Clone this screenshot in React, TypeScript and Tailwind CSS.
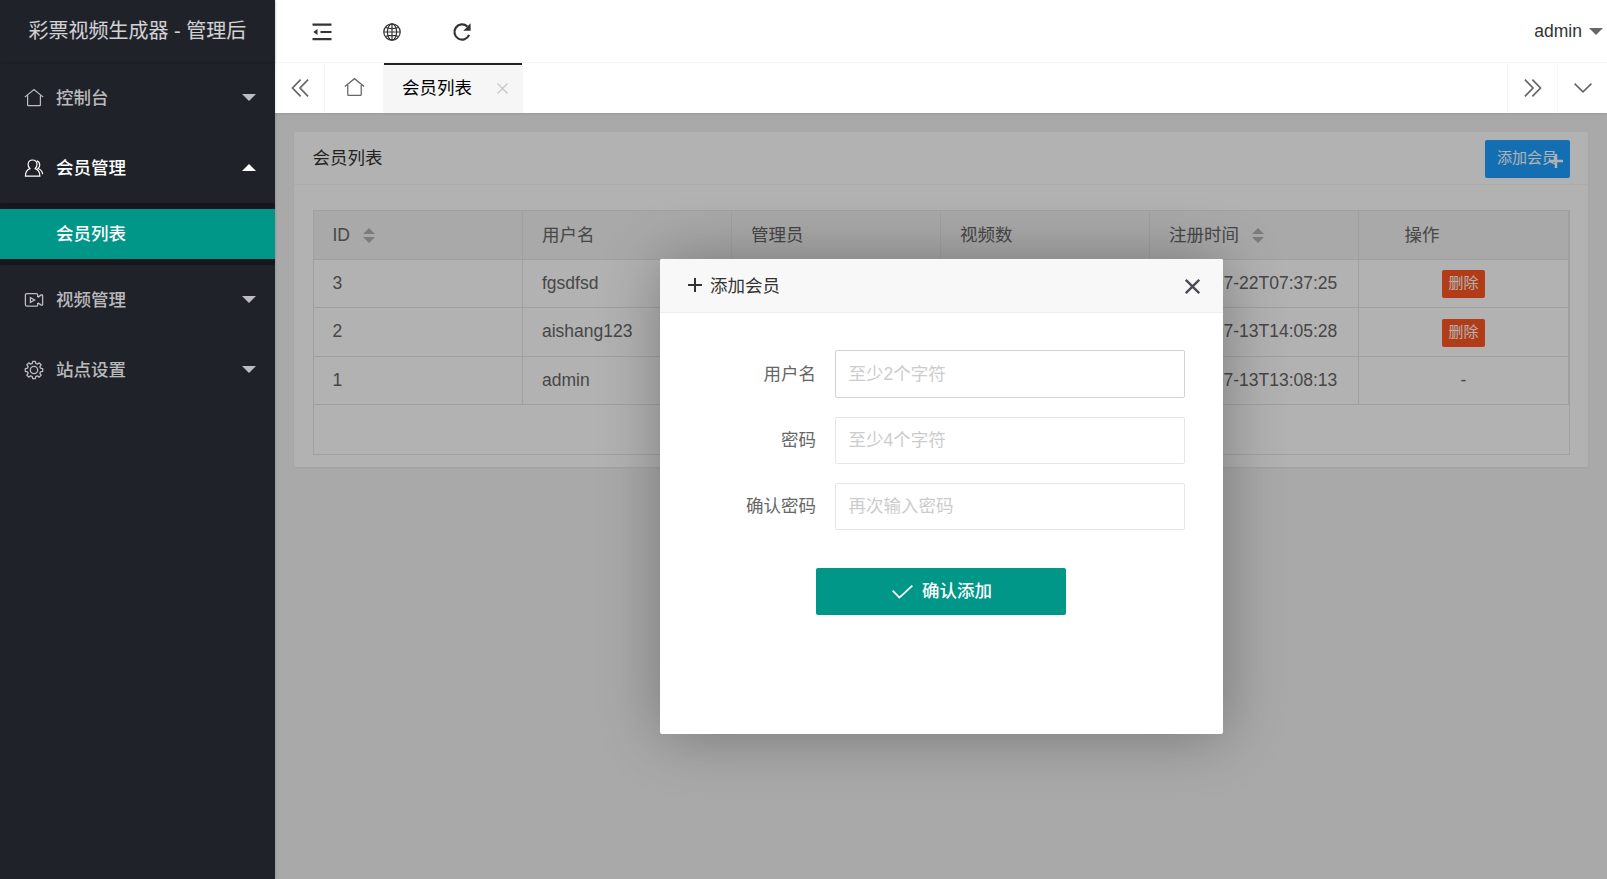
import type { ReactNode } from 'react'

const FONT = "font-['Liberation_Sans','Noto_Sans_CJK_SC',sans-serif]"

// ─── Icons ────────────────────────────────────────────────────────────────

function HomeIcon({ size = 20 }: { size?: number }) {
  return (
    <svg width={size} height={size} viewBox="0 0 20 20" fill="none" stroke="currentColor" strokeWidth="1.2">
      <path d="M.8 9.1 10 1.6l9.2 7.5" />
      <path d="M3.6 7.6v9.3q0 .7.7.7h11.4q.7 0 .7-.7V7.6" />
    </svg>
  )
}

function UserIcon() {
  return (
    <svg width="20" height="20" viewBox="0 0 20 20" fill="none" stroke="currentColor" strokeWidth="1.2">
      <path d="M5.9 10.6C4.500 9.300 4 7.800 4.100 6.300 4.300 3.600 6.100 2 8.500 2s4.300 1.600 4.500 4.300c.1 1.500-.4 3-1.800 4.300 3 1.200 4.700 3.700 4.700 7.600H1.400c0-3.900 1.500-6.400 4.500-7.600Z" />
      <path d="M12.800 2.900c1.900.7 2.900 2.100 2.900 4 0 1.500-.5 2.700-1.700 3.600 2.700 1 4.400 3 4.700 5.800" />
    </svg>
  )
}

function VideoIcon() {
  return (
    <svg width="20" height="20" viewBox="0 0 20 20" fill="none" stroke="currentColor" strokeWidth="1.3">
      <path d="M13.700 6.900V5q0-1.300-1.300-1.300H2.900Q1.400 3.700 1.400 5.200v9.300q0 1.700 1.500 1.700h9.500q1.300 0 1.300-1.300v-1.800" />
      <path d="m13.700 7.400 3.200-2.300q1.700-.9 1.700.5v8.800q0 1.400-1.700.5l-3.200-2.200" />
      <path d="M6.400 7.600v4.700l4.200-2.300Z" />
    </svg>
  )
}

function GearIcon() {
  return (
    <svg width="20" height="20" viewBox="0 0 20 20" fill="none" stroke="currentColor" strokeWidth="1.3" strokeLinejoin="round">
      <path d="m8.700 1.300 2.600 0 .5 2.200 1.500.6 1.900-1.200 1.900 1.900-1.200 1.900.6 1.500 2.200.5v2.600l-2.200.5-.6 1.500 1.200 1.900-1.900 1.900-1.900-1.200-1.500.6-.5 2.200H8.700l-.5-2.200-1.500-.6-1.900 1.200-1.900-1.900 1.200-1.900-.6-1.500-2.200-.5V8.700l2.200-.5.6-1.500-1.200-1.900 1.900-1.900 1.900 1.200 1.500-.6Z" />
      <circle cx="10" cy="10" r="3.700" />
    </svg>
  )
}

function ShrinkIcon() {
  return (
    <svg width="20" height="20" viewBox="0 0 20 20" fill="currentColor">
      <path d="M.5 1.500h19v2.200H.5zM8.500 8.900h11v2.200h-11zM.5 15.900h19v2.300H.5zM1.300 10l4.200-3v6z" />
    </svg>
  )
}

function GlobeIcon() {
  return (
    <svg width="20" height="20" viewBox="0 0 20 20" fill="none" stroke="currentColor" strokeWidth="1.2">
      <circle cx="10" cy="10" r="8.200" />
      <ellipse cx="10" cy="10" rx="4.600" ry="8.200" />
      <path d="M10 1.800v16.400M1.800 10h16.400M3.300 5.500q6.700 2.200 13.400 0M3.300 14.500q6.700-2.200 13.400 0" />
    </svg>
  )
}

function RefreshIcon() {
  return (
    <svg width="20" height="20" viewBox="0 0 20 20" fill="none">
      <path d="M17.100 12.900A7.600 7.600 0 1 1 15.300 4.500" stroke="currentColor" strokeWidth="2.200" />
      <path d="M18.600 1.300v7.500h-7.400l2.700-2.600 1.400-1.600Z" fill="currentColor" />
    </svg>
  )
}

function DoubleChevron({ flip = false }: { flip?: boolean }) {
  return (
    <svg
      width="20"
      height="20"
      viewBox="0 0 20 20"
      fill="none"
      stroke="currentColor"
      strokeWidth="1.7"
      className={flip ? 'rotate-180' : ''}
    >
      <path d="M10.600 1.700 2.500 10l8.100 8.300M18.100 1.700 10 10l8.100 8.300" />
    </svg>
  )
}

function Plus({ className = '', width = 2 }: { className?: string; width?: number }) {
  return (
    <svg width="14" height="14" viewBox="0 0 14 14" stroke="currentColor" strokeWidth={width} className={className}>
      <path d="M7 0v14M0 7h14" />
    </svg>
  )
}

function Caret({ up = false }: { up?: boolean }) {
  return (
    <svg width="14" height="7" viewBox="0 0 14 7" fill="currentColor" className={up ? 'rotate-180' : ''}>
      <path d="M0 0h14L7 7Z" />
    </svg>
  )
}

function SortIcon() {
  return (
    <svg width="12" height="15" viewBox="0 0 12 15" fill="#b2b2b2">
      <path d="M0 6 6 0l6 6ZM0 9h12l-6 6Z" />
    </svg>
  )
}

// ─── Sidebar ──────────────────────────────────────────────────────────────

function MenuItem({ icon, label, open = false }: { icon: ReactNode; label: string; open?: boolean }) {
  return (
    <a className={`flex h-[70px] items-center pr-[19px] pl-6 ${open ? 'text-white' : 'text-white/70'}`}>
      {icon}
      <span className="ml-3 flex-1 font-medium">{label}</span>
      <span className="pb-[2px]"><Caret up={open} /></span>
    </a>
  )
}

function Sidebar() {
  return (
    <aside className="z-20 w-[275px] shrink-0 bg-[#20222a] shadow-[1px_0_2px_rgba(0,0,0,0.1)]">
      <div className="flex h-[62px] items-center pl-[28.5px] text-[20px] whitespace-nowrap text-white/80 shadow-[0_1px_2px_rgba(0,0,0,0.15)]">
        彩票视频生成器 - 管理后
      </div>
      <nav className="pt-[1px]">
        <MenuItem icon={<HomeIcon />} label="控制台" />
        <MenuItem icon={<UserIcon />} label="会员管理" open />
        <div className="rounded-[2px] bg-black/30 py-[6px]">
          <a className="flex h-[50px] items-center bg-[#009688] pl-14 font-medium text-white">会员列表</a>
        </div>
        <MenuItem icon={<VideoIcon />} label="视频管理" />
        <MenuItem icon={<GearIcon />} label="站点设置" />
      </nav>
    </aside>
  )
}

// ─── Header and tabs ──────────────────────────────────────────────────────

function Header() {
  return (
    <header className="flex h-[63px] items-center border-b border-[#f6f6f6] bg-white pl-[12px] text-[#333]">
      <span className="flex w-[70px] justify-center pt-[1px]"><ShrinkIcon /></span>
      <span className="flex w-[70px] justify-center pt-[1px]"><GlobeIcon /></span>
      <span className="flex w-[70px] justify-center pt-[1px]"><RefreshIcon /></span>
      <div className="ml-auto flex items-center gap-[7px] pr-[4px]">
        <span>admin</span>
        <span className="text-[#666]"><Caret /></span>
      </div>
    </header>
  )
}

function TabBar() {
  return (
    <div className="z-10 flex h-[50px] bg-white text-[#666] shadow-[0_1px_2px_rgba(0,0,0,0.1)]">
      <span className="flex w-[50px] items-center justify-center border-r border-[#f6f6f6] pb-[1px]">
        <DoubleChevron />
      </span>
      <span className="flex w-[58px] items-center justify-center pb-[2px]">
        <HomeIcon size={21} />
      </span>
      <div className="flex w-[140px] flex-col bg-[#f6f6f6]">
        <div className="mr-[1px] ml-[1px] h-[2px] bg-[#20222a]" />
        <div className="flex flex-1 items-center pb-[2px] pl-[19px] text-black">
          会员列表
          <svg width="11" height="11" viewBox="0 0 11 11" stroke="#c6c6c6" strokeWidth="1.2" className="mt-[1px] ml-[25px]">
            <path d="m.5.500 10 10M10.500.500l-10 10" />
          </svg>
        </div>
      </div>
      <span className="ml-auto flex w-[50px] items-center justify-center border-l border-[#f6f6f6] pb-[1px]">
        <DoubleChevron flip />
      </span>
      <span className="flex w-[50px] items-center justify-center border-l border-[#f6f6f6] pb-[1px]">
        <svg width="18" height="10" viewBox="0 0 18 10" fill="none" stroke="currentColor" strokeWidth="1.6">
          <path d="M.6.600 9 8.800 17.400.600" />
        </svg>
      </span>
    </div>
  )
}

// ─── Member list ──────────────────────────────────────────────────────────

const columns = [
  { title: 'ID', sort: true },
  { title: '用户名' },
  { title: '管理员' },
  { title: '视频数' },
  { title: '注册时间', sort: true },
]

const members = [
  { id: 3, name: 'fgsdfsd', created: '2020-07-22T07:37:25', removable: true },
  { id: 2, name: 'aishang123', created: '2020-07-13T14:05:28', removable: true },
  { id: 1, name: 'admin', created: '2020-07-13T13:08:13', removable: false },
]

const rowHeights = ['h-[48px]', 'h-[49px]', 'h-[48px]']

function Cell({ children }: { children?: ReactNode }) {
  return (
    <div className="flex w-[209px] items-center border-r border-[#e6e6e6] pl-[19px] first:pl-[18.5px]">
      {children}
    </div>
  )
}

function MemberTable() {
  return (
    <div className="h-[245px] border border-[#e6e6e6]">
      <div className="flex h-[49px] border-b border-[#e6e6e6] bg-[#f2f2f2]">
        {columns.map((c) => (
          <Cell key={c.title}>
            {c.title}
            {c.sort && <span className="ml-[12.5px]"><SortIcon /></span>}
          </Cell>
        ))}
        <div className="flex flex-1 items-center border-r border-[#e6e6e6] pl-[45.5px]">操作</div>
      </div>
      {members.map((m, i) => (
        <div key={m.id} className={`flex border-b border-[#e6e6e6] *:pb-[1px] ${rowHeights[i]}`}>
          <Cell>{m.id}</Cell>
          <Cell>{m.name}</Cell>
          <Cell />
          <Cell />
          <Cell>{m.created}</Cell>
          <div className="flex flex-1 items-center justify-center border-r border-[#e6e6e6]">
            {m.removable ? (
              <button className="mt-[2px] h-[28px] rounded-[2px] bg-[#ff5722] px-[6.5px] pb-[2px] text-[15px] leading-[26px] text-white">
                删除
              </button>
            ) : (
              '-'
            )}
          </div>
        </div>
      ))}
    </div>
  )
}

function MemberCard() {
  return (
    <section className="h-[335px] rounded-[2px] bg-white shadow-[0_1px_2px_rgba(0,0,0,0.05)]">
      <div className="flex h-[53px] items-center justify-between border-b border-[#f6f6f6] pr-[18px] pl-[18.5px] text-[#333]">
        <h2>会员列表</h2>
        <button className="relative mt-[2px] h-[38px] w-[85px] rounded-[2px] bg-[#1e9fff] pb-[2px] pl-[12px] text-left text-[15px] leading-[36px] text-white">
          添加会员
          <Plus className="absolute top-[14px] left-[64px]" width={2.4} />
        </button>
      </div>
      <div className="pt-[25px] pr-[18px] pl-[19px]">
        <MemberTable />
      </div>
    </section>
  )
}

// ─── Add member dialog ────────────────────────────────────────────────────

function Field({ label, placeholder, active = false }: { label: string; placeholder: string; active?: boolean }) {
  return (
    <div className="flex items-center">
      <label className="w-[156px] text-right">{label}</label>
      <input
        placeholder={placeholder}
        className={`ml-[19px] w-[350px] rounded-[2px] border bg-white pl-[12.5px] outline-none placeholder:text-[#ccc] ${
          active ? 'h-[48px] border-[#d2d2d2]' : 'h-[47px] border-[#e6e6e6] pb-[1px]'
        }`}
      />
    </div>
  )
}

function AddMemberDialog() {
  return (
    <div className="absolute top-[146px] left-[385px] h-[475px] w-[563px] rounded-[2px] bg-white shadow-[1px_1px_62px_rgba(0,0,0,0.3)]">
      <div className="flex h-[54px] items-center rounded-t-[2px] border-b border-[#eee] bg-[#f8f8f8] pr-[23px] pl-[28px] text-[#333]">
        <Plus className="mb-[1px]" />
        <span className="ml-[8px] flex-1 pt-[1px]">添加会员</span>
        <svg width="15" height="15" viewBox="0 0 15 15" stroke="#4b4a56" strokeWidth="2.3" className="mt-[2px]">
          <path d="m.8.800 13.400 13.400M14.200.800.8 14.200" />
        </svg>
      </div>
      <form className="flex flex-col pt-[37px]">
        <div className="flex flex-col gap-[19px]">
          <Field label="用户名" placeholder="至少2个字符" active />
          <Field label="密码" placeholder="至少4个字符" />
          <Field label="确认密码" placeholder="再次输入密码" />
        </div>
        <button
          type="button"
          className="mt-[38px] ml-[156px] flex h-[47px] w-[250px] items-center rounded-[2px] bg-[#009688] pl-[76px] text-white"
        >
          <svg width="21" height="14" viewBox="0 0 21 14" fill="none" stroke="currentColor" strokeWidth="1.8">
            <path d="M.7 5.600 7.400 12.600 20.400.700" />
          </svg>
          <span className="ml-[9px] font-medium">确认添加</span>
        </button>
      </form>
    </div>
  )
}

export default function App() {
  return (
    <div className={`flex h-screen w-full overflow-hidden bg-[#f2f2f2] text-[17.5px] text-[#666] ${FONT}`}>
      <Sidebar />
      <div className="flex min-w-0 flex-1 flex-col">
        <Header />
        <TabBar />
        <main className="relative flex-1 overflow-hidden pt-[19px] pr-[19px] pl-[19px]">
          <MemberCard />
          <div className="absolute inset-0 bg-black/30" />
          <AddMemberDialog />
        </main>
      </div>
    </div>
  )
}
